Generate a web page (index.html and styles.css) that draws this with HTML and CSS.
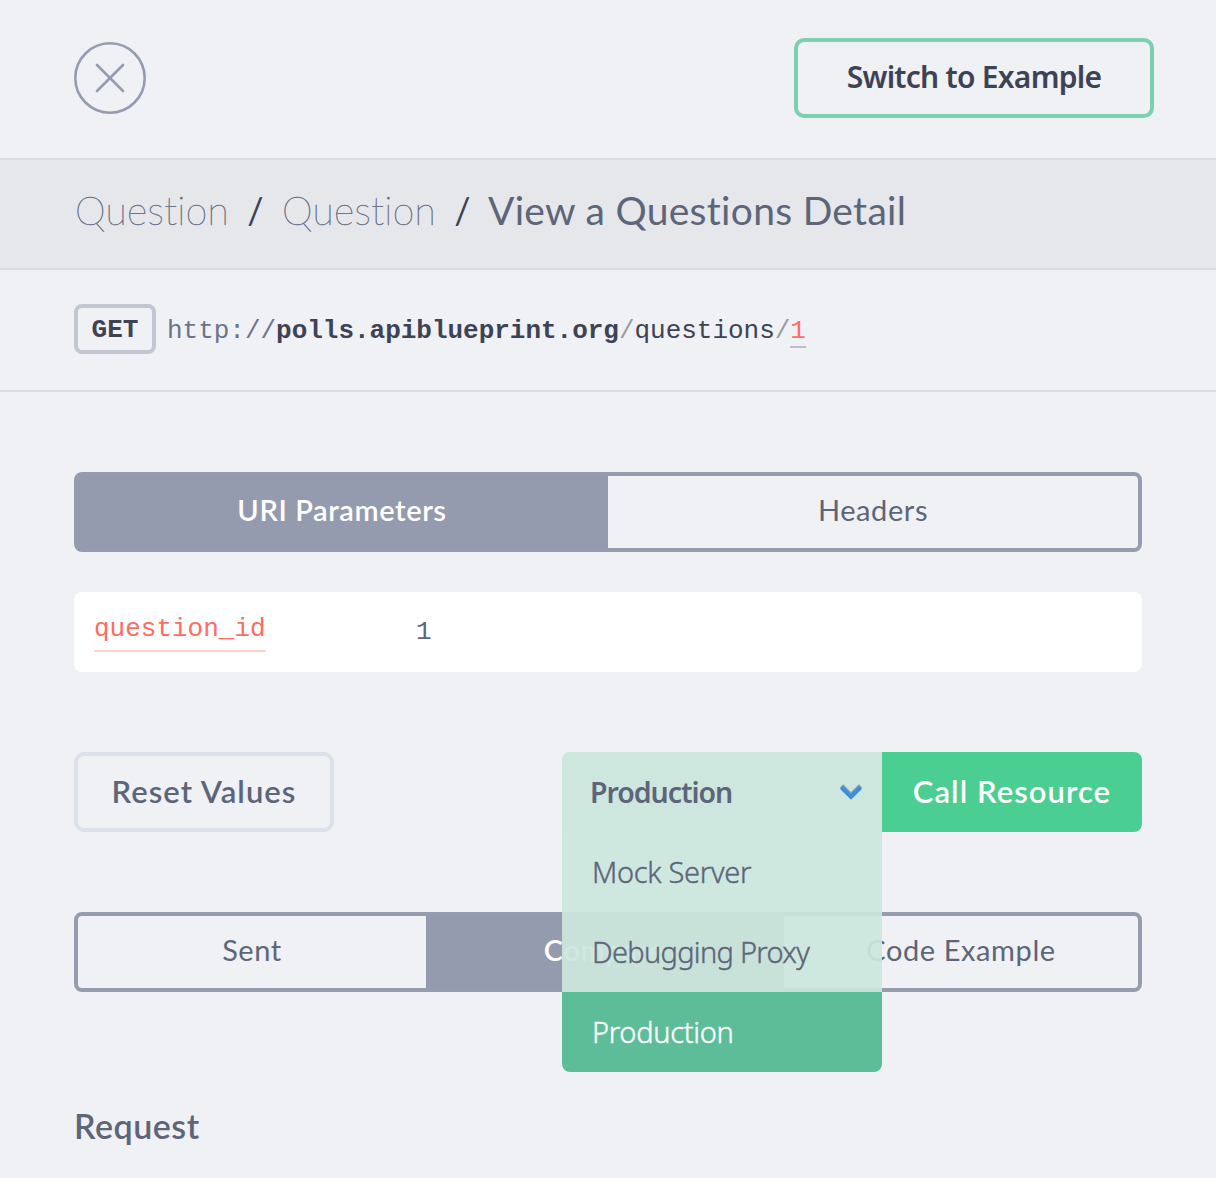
FILE: index.html
```html
<!DOCTYPE html>
<html lang="en">
<head>
<meta charset="utf-8">
<title>View a Questions Detail</title>
<link rel="stylesheet" href="styles.css">
</head>
<body>
<header class="topbar">
  <button class="close" aria-label="Close">
    <svg width="72" height="72" viewBox="0 0 72 72" fill="none" stroke="#949cae" stroke-width="2.6" stroke-linecap="round"><circle cx="36" cy="36" r="34.7"/><path d="M23 23 49 49M49 23 23 49"/></svg>
  </button>
  <button class="switch">Switch to Example</button>
</header>
<nav class="crumbs">
  <a class="crumb">Question</a><span class="sep">/</span><a class="crumb">Question</a><span class="sep">/</span><span class="current">View a Questions Detail</span>
</nav>
<section class="endpoint">
  <span class="method">GET</span>
  <code class="url"><span class="scheme">http://</span><b>polls.apiblueprint.org</b><span class="slash">/</span>questions<span class="slash">/</span><span class="param">1</span></code>
</section>
<main class="console">
  <div class="tabs two">
    <div class="tab active">URI Parameters</div>
    <div class="tab">Headers</div>
  </div>
  <div class="row">
    <span class="key">question_id</span>
    <span class="value">1</span>
  </div>
  <div class="actions">
    <button class="reset">Reset Values</button>
    <div class="call">
      <div class="picker">
        <div class="selected">Production
          <svg width="24" height="18" viewBox="0 0 24 18" fill="none"><path d="M2.5 3 12 12.5 21.5 3" stroke="#7d9daa" stroke-width="4.6"/><path d="M2.5 4.5 12 14 21.5 4.5" stroke="#3b8de0" stroke-width="4"/></svg>
        </div>
        <div class="menu">
          <div class="option">Mock Server</div>
          <div class="option tight">Debugging Proxy</div>
          <div class="option chosen">Production</div>
        </div>
      </div>
      <button class="submit">Call Resource</button>
    </div>
  </div>
  <div class="tabs three">
    <div class="tab">Sent</div>
    <div class="tab active">Compare</div>
    <div class="tab">Code Example</div>
  </div>
  <h2 class="heading">Request</h2>
</main>
</body>
</html>
```
FILE: styles.css
```css
* { box-sizing: border-box; }
body {
  margin: 0;
  height: 1178px;
  overflow: hidden;
  background: #eff1f5;
  color: #5d6579;
  font: 400 30px/1 Lato, sans-serif;
  font-variant-ligatures: none;
  white-space: nowrap;
}
button { padding: 0; border: 0; background: none; color: inherit; font: inherit; letter-spacing: inherit; }
.topbar {
  display: flex;
  justify-content: space-between;
  align-items: center;
  height: 158px;
  padding: 0 62px 2px 74px;
}
.close, .close svg { display: block; width: 72px; height: 72px; }
.switch {
  width: 360px;
  height: 80px;
  padding-bottom: 2px;
  border: 4px solid #7bd1af;
  border-radius: 10px;
  color: #3d4354;
  font: 600 30px/1 "Noto Sans", sans-serif;
  letter-spacing: -.75px;
}
.crumbs {
  display: flex;
  align-items: center;
  height: 112px;
  padding: 0 74px 8px;
  border: solid #dadce1;
  border-width: 2px 0;
  background: #e5e7eb;
  font-size: 39px;
}
.crumb { width: 154px; padding-left: 1px; font-weight: 100; letter-spacing: .35px; -webkit-text-stroke: .5px #6c7488; }
.sep { width: 53px; padding-left: 2px; text-align: center; color: #3d4354; font-size: 36px; }
.current { letter-spacing: .3px; }
.endpoint {
  display: flex;
  align-items: center;
  gap: 11px;
  height: 122px;
  padding: 0 74px 2px;
  border-bottom: 2px solid #dadce1;
  color: #3d4354;
  font: 26px/36px "Liberation Mono", monospace;
}
.method {
  width: 82px;
  height: 50px;
  border: 4px solid #c1c6d1;
  border-radius: 8px;
  font-weight: 700;
  line-height: 45px;
  text-align: center;
}
.url { padding-top: 3px; font: inherit; letter-spacing: -.02px; }
.scheme { color: #6c7488; }
.slash { color: #949cae; }
.param { display: inline-block; height: 35px; border-bottom: 2px solid #babfd0; color: #ff6c63; }
.console { padding: 80px 74px 0; }
.tabs {
  display: grid;
  height: 80px;
  border: 4px solid #949cae;
  border-radius: 8px;
  font-size: 29px;
  letter-spacing: .6px;
}
.two { grid-template-columns: 530px 1fr; }
.three { grid-template-columns: 348px 358px 1fr; margin-top: 80px; }
.tab { display: flex; align-items: center; justify-content: center; padding-bottom: 6px; }
.active { padding-right: 2px; background: #959bae; color: #fff; font-weight: 600; }
.row {
  display: flex;
  align-items: center;
  height: 80px;
  margin-top: 40px;
  padding-left: 20px;
  border-radius: 8px;
  background: #fff;
  font: 26px/36px "Liberation Mono", monospace;
}
.key { height: 42px; width: 172px; margin-bottom: 2px; border-bottom: 2px solid #ffcfcc; color: #ff6c63; line-height: 38px; }
.value { margin-left: 150px; }
.actions { display: flex; justify-content: space-between; height: 80px; margin-top: 80px; font-weight: 600; font-size: 31px; letter-spacing: 1.05px; }
.reset { width: 260px; padding-bottom: 2px; border: 4px solid #dce1eb; border-radius: 10px; }
.call { display: flex; }
.picker { position: relative; width: 320px; font-family: "Noto Sans", sans-serif; font-size: 29px; letter-spacing: -.3px; }
.selected {
  display: flex;
  align-items: center;
  justify-content: space-between;
  height: 80px;
  padding: 0 19px 0 28px;
  border-radius: 8px 0 0 0;
  background: #cee7de;
  font-size: 28.5px;
  letter-spacing: -1.05px;
}
.menu { position: absolute; top: 80px; left: 0; width: 320px; font-weight: 300; -webkit-text-stroke: .4px; }
.option { display: flex; align-items: center; height: 80px; padding: 0 0 1px 30px; background: rgba(203, 231, 221, .93); }
.tight { letter-spacing: -.7px; }
.chosen { border-radius: 0 0 8px 8px; background: #5ebd99; color: #fff; }
.submit { width: 260px; padding-bottom: 2px; border-radius: 0 8px 8px 0; background: #4bce91; color: #fff; }
.heading { margin: 116px 0 0; font-size: 34px; font-weight: 600; line-height: 36px; letter-spacing: .5px; }
```
